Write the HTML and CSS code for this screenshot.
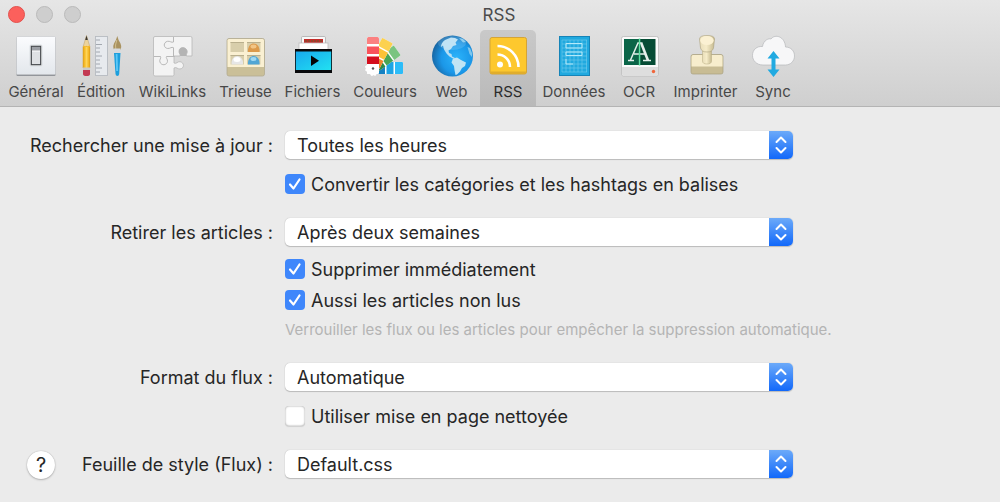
FILE: index.html
```html
<!DOCTYPE html>
<html lang="fr">
<head>
<meta charset="utf-8">
<meta name="viewport" content="width=device-width, initial-scale=1">
<title>RSS</title>
<link rel="stylesheet" href="styles.css">
</head>
<body>
<header class="chrome">
  <div class="titlebar">
    <div class="lights">
      <button class="light light-close" aria-label="Fermer"></button>
      <button class="light" aria-label="Réduire" disabled></button>
      <button class="light" aria-label="Agrandir" disabled></button>
    </div>
    <h1 class="title">RSS</h1>
  </div>
  <nav class="toolbar">
    <button class="tab">
      <svg class="icon" viewBox="0 0 44 44" aria-hidden="true">
        <defs><linearGradient id="plate" x1="0" y1="0" x2="0" y2="1"><stop offset="0" stop-color="#fbfcfe"/><stop offset="1" stop-color="#e3e7ec"/></linearGradient></defs>
        <rect x="2.5" y="3" width="39" height="39" rx="1" fill="#92959a"/>
        <rect x="2.5" y="2.5" width="39" height="38" rx="1" fill="url(#plate)" stroke="#c4c6ca" stroke-width=".6"/>
        <rect x="16" y="11" width="12" height="21" rx="1" fill="#fff" stroke="#cfd3d8" stroke-width=".6"/>
        <rect x="17.3" y="12.3" width="9.4" height="18.4" fill="#dfe1e4" stroke="#44474c" stroke-width="1.2"/>
        <rect x="18" y="13" width="8" height="4" fill="#9b9ea4"/>
        <path d="M18 17h8" stroke="#fff"/>
      </svg>
      <span>Général</span>
    </button>
    <button class="tab">
      <svg class="icon" viewBox="0 0 44 44" aria-hidden="true">
        <path d="M4 13 7.500 1.500 11 13z" fill="#ecd39c" stroke="#b89b66" stroke-width=".5"/>
        <path d="m6.200 6 1.300-4.600L8.800 6z" fill="#3c3832"/>
        <path d="M4 12.500q1.200-1.500 2.200 0 1.300-1.500 2.600 0 1-1.500 2.200 0V34H4z" fill="#f5b928"/>
        <path d="M4.200 13v21" stroke="#d3961a" stroke-width=".7"/><path d="M7.500 13v21" stroke="#ffd558" stroke-width="2"/><path d="M10.700 13v21" stroke="#d3961a" stroke-width=".7"/>
        <path d="M4 33.500h7v3H4z" fill="#c9c9c9"/><path d="M4 36h7v4q0 2-3.500 2T4 40z" fill="#c33a53"/>
        <rect x="16.500" y="2.500" width="12" height="39" fill="#e7eaee" stroke="#b7bbc1" stroke-width=".9"/>
        <path d="M17 6h4M17 10.500h6M17 14h4M17 18h4M17 22h6M17 26h4M17 30h4M17 34h6M17 38h4" stroke="#92979e" stroke-width=".8"/>
        <path d="M38.300 2q-1 4-3.300 7.500-2 4.500 1.500 8h3.600q3.300-3.500 1.400-8Q39.200 6 38.300 2z" fill="#aa9360"/>
        <path d="M37.800 6q-2 5-1 10" fill="none" stroke="#d1bf90"/>
        <path d="M35 14.500h6.500V20H35z" fill="#d7dade"/>
        <path d="M35 19h6.500L40.200 40q-.2 2-1.800 2T36.500 40z" fill="#1d9fdd"/>
        <path d="m37.600 20 .5 17" stroke="#5cc8f7" stroke-width="1.800"/>
      </svg>
      <span>Édition</span>
    </button>
    <button class="tab">
      <svg class="icon" viewBox="0 0 44 44" aria-hidden="true">
        <path d="M4 2.500H39.500Q41 2.500 41 4V22H35.500C34.500 20.500 37 19 36 16.500 34.500 12.500 28.500 12.500 28 17c-.3 2.500 2 3.500 1 5H23V29c2.500 1.300 3.500-1.700 6-1.300 4.600.8 4.600 6.700 0 7.300-2.500.3-3.500-2.500-6-1V40.500Q23 42 21.500 42H4Q2.500 42 2.500 40.500V4Q2.500 2.500 4 2.500z" fill="#f3f3f3" stroke="#b6b6b6" stroke-width=".8"/>
        <path d="M28 17c.5-4.500 6.500-4.500 8-.5.8 2.500-1.500 4-.5 5.500H29c1-1.500-1.300-2.500-1-5z" fill="#b4b4b4"/>
        <path d="M22.500 3v5c-2 1-3.500-1.200-6-.7-4.500 1-4.200 6.700.2 7.200 2.500.2 3.800-2 5.800-.8V22M3 22.500h6.500c1 1.800-1.500 3-.6 5.500 1.500 4 7 3.500 7.600-.7.300-2.200-2-3.300-1-4.800h8" fill="none" stroke="#b1b1b1" stroke-width=".9"/>
      </svg>
      <span>WikiLinks</span>
    </button>
    <button class="tab">
      <svg class="icon" viewBox="0 0 44 44" aria-hidden="true">
        <rect x="3" y="4.500" width="37.500" height="37.500" rx="2" fill="#cabf98" stroke="#b2ab91" stroke-width=".8"/>
        <path d="M5 5h33.500q1.500 0 1.500 1.500V33h-36.500V6.500Q3.500 5 5 5z" fill="#faf0d2"/>
        <path d="M6.500 8H20v10H6.500zM23 8h13.500v10H23zM6.500 21H20v9.500H6.500zM23 21h13.500v9.500H23z" fill="#d8ceab"/>
        <path d="M6.500 8H20v1H6.500zM23 8h13.500v1H23zM6.500 21H20v1H6.500zM23 21h13.500v1H23z" fill="#b9af8d"/>
        <path d="M24 18C23 6.500 36.500 6.500 35.500 18z" fill="#dc9a4b"/><ellipse cx="29.500" cy="12.500" rx="3" ry="2" fill="#f2c585"/>
        <path d="M7.500 30.500C6.500 19 20 19 19 30.500z" fill="#e6e6e6"/><ellipse cx="13" cy="25.500" rx="3.500" ry="2.500" fill="#fff"/>
        <path d="M24 30.500C23 19 36.500 19 35.500 30.500z" fill="#51a6d4"/><ellipse cx="29.500" cy="25" rx="3" ry="2" fill="#9fd8f2"/>
      </svg>
      <span>Trieuse</span>
    </button>
    <button class="tab">
      <svg class="icon" viewBox="0 0 44 44" aria-hidden="true">
        <defs><linearGradient id="film" x1="0" y1="0" x2="1" y2="1"><stop offset="0" stop-color="#18a9ee"/><stop offset="1" stop-color="#22e1f1"/></linearGradient></defs>
        <rect x="10.500" y="2.500" width="24" height="12" rx="1.200" fill="#f8f8f8" stroke="#acacac" stroke-width=".8"/>
        <rect x="13" y="5" width="19" height="4" fill="#c32b28"/><path d="M14 7h17" stroke="#81502f" stroke-width="1.500" stroke-dasharray="2 1"/>
        <rect x="8" y="9" width="29" height="8" fill="#fff" stroke="#bcbcbc" stroke-width=".8"/>
        <rect x="4" y="15" width="37" height="24" fill="#08090b"/><rect x="4.800" y="17.500" width="35.400" height="18.500" fill="url(#film)"/>
        <path d="m20 21.500 8 5.200-8 5.300z" fill="#050505"/>
      </svg>
      <span>Fichiers</span>
    </button>
    <button class="tab">
      <svg class="icon" viewBox="0 0 44 44" aria-hidden="true">
        <g transform="rotate(90 10 34)"><rect x="4" y="4" width="12" height="36" rx="1" fill="#fff"/><path d="M4 5q0-1 1-1h10q1 0 1 1v7H4z" fill="#2cbcf8"/><path d="M4 13.500h12v7H4z" fill="#1da4e4"/><path d="M4 22h12v8H4z" fill="#1581c2"/></g>
        <g transform="rotate(54 10 34)"><rect x="4" y="4" width="12" height="36" rx="1" fill="#fff"/><path d="M4 5q0-1 1-1h10q1 0 1 1v7H4z" fill="#7ac480"/><path d="M4 13.500h12v8H4z" fill="#48a556"/><path d="M4 23h12v8H4z" fill="#2b8a48"/></g>
        <g transform="rotate(28 10 34)"><rect x="4" y="3" width="12" height="37" rx="1" fill="#fff"/><path d="M4 4q0-1 1-1h10q1 0 1 1v8H4z" fill="#fcd150"/><path d="M4 13.500h12v8H4z" fill="#fbc236"/><path d="M4 23h12v8H4z" fill="#f0872b"/></g>
        <rect x="4" y="3" width="12" height="37" rx="1" fill="#fff"/>
        <path d="M4 4.500Q4 3 5.500 3h9Q16 3 16 4.500V10H4z" fill="#fb8080"/><path d="M4 12.500h12V20H4z" fill="#f9525a"/><path d="M4 22.500h12V30H4z" fill="#d40e1d"/><circle cx="10" cy="34.500" r="1.200" fill="#555"/>
      </svg>
      <span>Couleurs</span>
    </button>
    <button class="tab">
      <svg class="icon" viewBox="0 0 44 44" aria-hidden="true">
        <defs><radialGradient id="sea" cx=".6" cy=".55" r=".62"><stop offset="0" stop-color="#2bb4fb"/><stop offset=".6" stop-color="#1b97e8"/><stop offset="1" stop-color="#17639f"/></radialGradient></defs>
        <circle cx="22.500" cy="22" r="20.500" fill="url(#sea)"/>
        <path d="M11 13q0-4 4-7l6-2.500 4 .5 3 1.500-2.500 3 1 2.500-3.500 1-2 3-2.500 1.500.5 2.500 2.500 1 .5 2.500 3 1.500-2 .5-3.500-2-3-3-2.500-4-1-4z" fill="#b7dff4"/>
        <path d="m29 4 4 1 3 3-3 .5zM37.500 13l2.500 1 2 5v4l-2.500-3z" fill="#7cc6ee"/>
        <path d="m23 24.500 4-1 4 2.500 5 2.500-1 3.500-3 2-2 3.500-3 3-1.500.5-1-5-.5-4-2.500-3.500z" fill="#c1e4f4"/>
        <ellipse cx="22" cy="9" rx="14" ry="7" fill="#fff" opacity=".14"/>
      </svg>
      <span>Web</span>
    </button>
    <button class="tab tab-current" aria-current="page">
      <svg class="icon" viewBox="0 0 44 44" aria-hidden="true">
        <rect x="4" y="3.500" width="36.500" height="36.500" rx="2" fill="#fdc82e" stroke="#d4a437"/>
        <path d="M4.500 37.500h35.500V38q0 2-2 2h-31.500q-2 0-2-2z" fill="#e0ad2c"/>
        <circle cx="14" cy="30.500" r="3" fill="#fff"/><path d="M11.500 20.500a12.500 12.500 0 0 1 12.500 12.500M11.500 12a21 21 0 0 1 21 21" fill="none" stroke="#fff" stroke-width="2.600"/>
      </svg>
      <span>RSS</span>
    </button>
    <button class="tab">
      <svg class="icon" viewBox="0 0 44 44" aria-hidden="true">
        <rect x="7.500" y="2.500" width="30" height="39" fill="#20a9df" stroke="#1684b8"/>
        <path d="M10 6v32M14 6v32M18 6v32M22 6v32M26 6v32M30 6v32M34.500 6v32M10 6h25M10 10h25M10 14h25M10 18h25M10 22h25M10 26h25M10 30h25M10 34h25M10 38h25" stroke="#73cced" stroke-width=".6"/>
        <path d="M14 14V9.500h16V14H14M14 18h16v3.500H14zM14 25v5h7" fill="none" stroke="#b4eafa" stroke-width="1"/>
      </svg>
      <span>Données</span>
    </button>
    <button class="tab">
      <svg class="icon" viewBox="0 0 44 44" aria-hidden="true">
        <rect x="4.500" y="2.500" width="37" height="39.500" rx="2" fill="#fafafa" stroke="#b4b4b4" stroke-width=".7"/>
        <path d="M5 33h36v7q0 2-2 2H7q-2 0-2-2z" fill="#dedede"/>
        <rect x="7" y="5" width="31.500" height="26" fill="#064c35"/><path d="M7 5h14v26H7z" fill="#0a6548"/>
        <path d="m13.500 26 7.500-17h3M17 20h11M11 26.500h6M26 26.500h8" fill="none" stroke="#e5efeb" stroke-width="1.500"/><path d="m24 8.500 7 18" stroke="#e5efeb" stroke-width="2.600"/>
        <path d="M22.500 4.500v27" stroke="#5ce0a2" stroke-width="1.600"/><circle cx="36.500" cy="37.500" r="1.700" fill="#f0663b"/>
      </svg>
      <span>OCR</span>
    </button>
    <button class="tab">
      <svg class="icon" viewBox="0 0 44 44" aria-hidden="true">
        <defs><linearGradient id="wood"><stop offset="0" stop-color="#e8ddb9"/><stop offset=".45" stop-color="#f6ecc9"/><stop offset="1" stop-color="#c5b98f"/></linearGradient></defs>
        <rect x="7" y="20.500" width="32" height="19.500" rx="2" fill="#c8bc94" stroke="#a9a080" stroke-width=".7"/>
        <path d="M9 21h28q1.500 0 1.500 2v9.500h-31V23q0-2 1.500-2z" fill="#f7edcd"/>
        <path d="M18.500 15h9v12q0 3-4.500 3t-4.500-3z" fill="url(#wood)" stroke="#b4a981" stroke-width=".5"/>
        <path d="M15.500 5q0-3.500 7.500-3.500T30.500 5l-1 9q-1 4-6.500 4t-6.500-4z" fill="url(#wood)" stroke="#aaa07c" stroke-width=".6"/>
        <ellipse cx="23" cy="6.500" rx="6.700" ry="4.500" fill="#fbf1d3"/>
      </svg>
      <span>Imprinter</span>
    </button>
    <button class="tab">
      <svg class="icon" viewBox="0 0 44 44" aria-hidden="true">
        <path d="M12 31C5.500 31 1.500 26.500 1.500 21.500c0-6 4.500-9.500 10-9C12.500 6 18 4 20 5 24-.5 34 2.500 34.500 13 40 13 43.500 17 43.500 22c0 5-4 9-9 9z" fill="#f7f7f8" stroke="#b6b7ba" stroke-width=".7"/>
        <path d="m22.500 17 6 7.500H24.500v11H28.500l-6 7.500-6-7.500H20.500v-11H16.500z" fill="#21aae1"/>
      </svg>
      <span>Sync</span>
    </button>
  </nav>
</header>

<main class="panel">
  <form class="form">
    <label class="label" for="refresh">Rechercher une mise à jour :</label>
    <div class="popup">
      <select id="refresh" class="select"><option>Toutes les heures</option></select>
      <svg class="arrows" viewBox="0 0 24 28" aria-hidden="true"><path d="m7.500 11 4.500-4.500 4.500 4.500M7.500 17l4.500 4.500 4.500-4.500"/></svg>
    </div>
    <div class="options">
      <label class="check"><input type="checkbox" class="box" checked>Convertir les catégories et les hashtags en balises</label>
    </div>

    <label class="label" for="expire">Retirer les articles :</label>
    <div class="popup">
      <select id="expire" class="select"><option>Après deux semaines</option></select>
      <svg class="arrows" viewBox="0 0 24 28" aria-hidden="true"><path d="m7.500 11 4.500-4.500 4.500 4.500M7.500 17l4.500 4.500 4.500-4.500"/></svg>
    </div>
    <div class="options options-list">
      <label class="check"><input type="checkbox" class="box" checked>Supprimer immédiatement</label>
      <label class="check"><input type="checkbox" class="box" checked>Aussi les articles non lus</label>
      <p class="hint">Verrouiller les flux ou les articles pour empêcher la suppression automatique.</p>
    </div>

    <label class="label" for="format">Format du flux :</label>
    <div class="popup">
      <select id="format" class="select"><option>Automatique</option></select>
      <svg class="arrows" viewBox="0 0 24 28" aria-hidden="true"><path d="m7.500 11 4.500-4.500 4.500 4.500M7.500 17l4.500 4.500 4.500-4.500"/></svg>
    </div>
    <div class="options">
      <label class="check"><input type="checkbox" class="box">Utiliser mise en page nettoyée</label>
    </div>

    <div class="label label-help">
      <button type="button" class="help" aria-label="Aide">?</button>
      <label for="sheet">Feuille de style (Flux) :</label>
    </div>
    <div class="popup">
      <select id="sheet" class="select"><option>Default.css</option></select>
      <svg class="arrows" viewBox="0 0 24 28" aria-hidden="true"><path d="m7.500 11 4.500-4.500 4.500 4.500M7.500 17l4.500 4.500 4.500-4.500"/></svg>
    </div>
  </form>
</main>
</body>
</html>
```

FILE: styles.css
```css
* {
  box-sizing: border-box;
}

body {
  margin: 0;
  min-height: 100vh;
  background: #ebebeb;
  color: #262626;
  font: 18px/24px Inter, "Liberation Sans", sans-serif;
}

button,
select,
input {
  margin: 0;
  padding: 0;
  border: 0;
  font: inherit;
  color: inherit;
}

.chrome {
  background: linear-gradient(#e6e6e6, #cfcfcf);
  border-bottom: 1px solid #b4b4b4;
}

.titlebar {
  display: grid;
  grid-template-columns: 1fr auto 1fr;
  align-items: center;
  height: 30px;
  padding: 0 10px 1px 8px;
}

.lights {
  display: flex;
  gap: 11px;
}

.light {
  width: 17px;
  height: 17px;
  border: 1px solid #bababa;
  border-radius: 50%;
  background: #cecece;
}

.light-close {
  border-color: #e2514d;
  background: #fc605c;
}

.title {
  margin: 0;
  font-size: 17px;
  font-weight: 400;
  color: #4b4b4b;
}

.toolbar {
  display: grid;
  grid-template-columns: 68px 62px 81px 65px 69px 76px 57px 56px 76px 54px 79px 56px;
  padding-left: 2px;
}

.tab {
  display: flex;
  flex-direction: column;
  align-items: center;
  gap: 4px;
  padding: 4px 0;
  background: none;
  border-radius: 5px 5px 0 0;
  font-size: 15px;
  line-height: 20px;
  color: #484848;
  white-space: nowrap;
}

.tab-current {
  background: linear-gradient(#c9c9c9, #b9b9b9);
  color: #2c2c2c;
}

.icon {
  display: block;
  width: 44px;
  height: 44px;
}

.panel {
  padding: 24px 28px 24px 27px;
}

.form {
  display: grid;
  grid-template-columns: 246px minmax(0, 508px);
  column-gap: 12px;
}

.label {
  line-height: 30px;
  text-align: right;
  white-space: nowrap;
}

.label-help {
  display: flex;
  justify-content: space-between;
  align-items: center;
}

.popup {
  display: grid;
  height: 29px;
}

.select,
.arrows {
  grid-area: 1 / 1;
}

.select {
  appearance: none;
  width: 100%;
  height: 28px;
  padding: 2px 36px 0 12px;
  border-radius: 5px;
  background: #fff;
  box-shadow: 0 0 1px #a8a8a8, 0 1px 1px #bcbcbc;
}

.arrows {
  justify-self: end;
  width: 24px;
  height: 28px;
  border-radius: 0 5px 5px 0;
  background: linear-gradient(#6caaf9, #1168fa);
  fill: none;
  stroke: #fff;
  stroke-width: 2;
  stroke-linecap: round;
  stroke-linejoin: round;
  pointer-events: none;
}

.options {
  grid-column: 2;
  padding: 8px 0 18px;
}

.options-list {
  padding: 6px 0 23px;
}

.check {
  display: flex;
  align-items: center;
  gap: 6px;
  height: 31px;
}

.box {
  appearance: none;
  width: 20px;
  height: 20px;
  margin-bottom: 2px;
  border-radius: 4px;
  background: #fff;
  box-shadow: inset 0 0 2px #8c8c8c, 0 1px 1px #d0d0d0;
}

.box:checked {
  background: #3f87fb url("data:image/svg+xml,%3Csvg xmlns='http://www.w3.org/2000/svg' viewBox='0 0 20 20'%3E%3Cpath d='m5 10.500 3.500 4 6-9' fill='none' stroke='white' stroke-width='2.200' stroke-linecap='round' stroke-linejoin='round'/%3E%3C/svg%3E");
  box-shadow: none;
}

.hint {
  margin: 4px 0 0;
  font-size: 15px;
  line-height: 20px;
  color: #b4b4b4;
  white-space: nowrap;
}

.help {
  width: 28px;
  height: 28px;
  border-radius: 50%;
  background: #fff;
  box-shadow: 0 0 1px #a0a0a0, 0 1px 2px #b4b4b4;
  font-size: 20px;
  line-height: 28px;
}
```
